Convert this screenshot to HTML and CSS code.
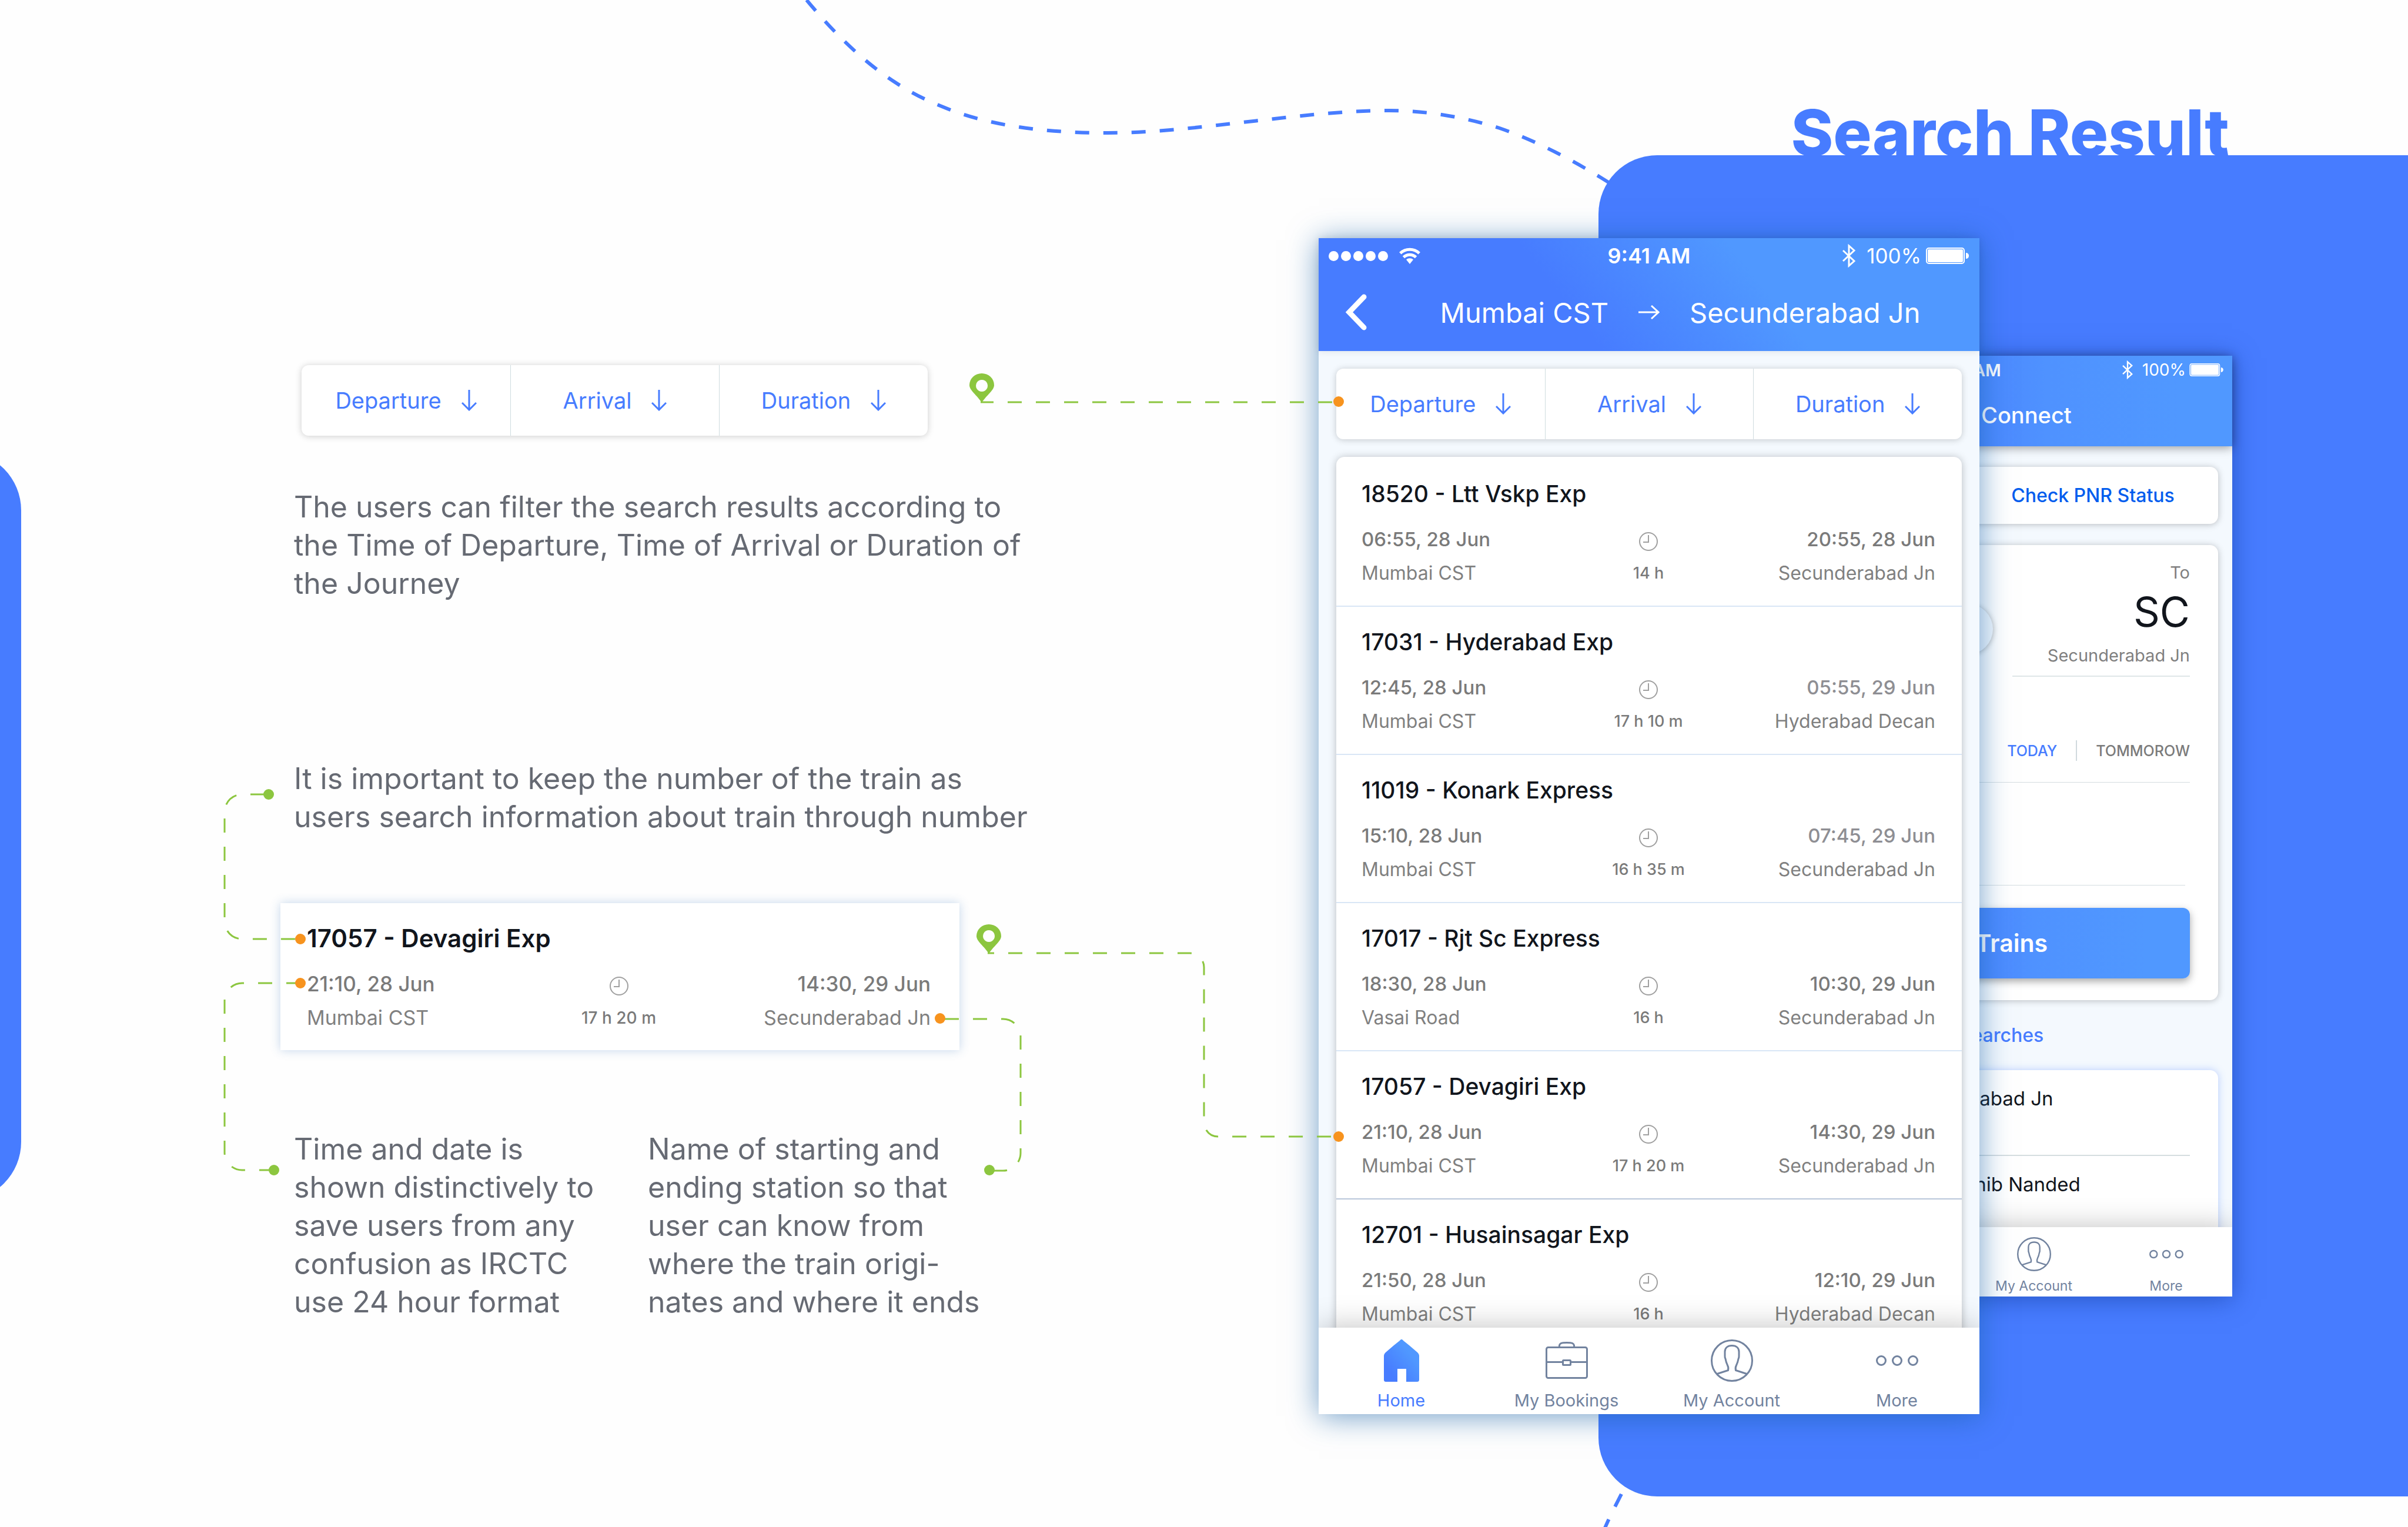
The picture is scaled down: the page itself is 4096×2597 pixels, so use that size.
FILE: index.html
```html
<!DOCTYPE html>
<html lang="en">
<head>
<meta charset="utf-8">
<title>Search Result</title>
<link rel="stylesheet" href="styles.css">
</head>
<body>
<svg class="symbols" aria-hidden="true">
  <defs>
    <linearGradient id="home-fill" x1="0" y1="1" x2="1" y2="0">
      <stop offset="0.2" stop-color="#477cff"/>
      <stop offset="0.7" stop-color="#5098ff"/>
    </linearGradient>
  </defs>
  <symbol id="i-wifi" viewBox="0 0 36 28">
    <path fill="#fff" d="M18 28l-6-7.500a9 9 0 0 1 12 0z"/>
    <path fill="none" stroke="#fff" stroke-width="5" d="M7.500 16.500a15 15 0 0 1 21 0M1.800 9.800a23.500 23.500 0 0 1 32.400 0"/>
  </symbol>
  <symbol id="i-bluetooth" viewBox="0 0 24 40">
    <path fill="none" stroke="#fff" stroke-width="3" d="M2 11l19 18-9 8V3l9 8L2 29"/>
  </symbol>
  <symbol id="i-battery" viewBox="0 0 74 28">
    <rect x="1" y="1" width="64" height="26" rx="4" fill="none" stroke="#fff" stroke-width="2"/>
    <rect x="3" y="3" width="60" height="22" rx="2" fill="#fff"/>
    <path fill="#fff" d="M68 9c3 0 5 2 5 5s-2 5-5 5z"/>
  </symbol>
  <symbol id="i-chevron" viewBox="0 0 38 62">
    <path fill="none" stroke="#fff" stroke-width="9" stroke-linecap="round" stroke-linejoin="miter" d="M32 5L7 31l25 26"/>
  </symbol>
  <symbol id="i-arrow-right" viewBox="0 0 36 24">
    <path fill="none" stroke="currentColor" stroke-width="3" d="M0 12h34M22 1l12 11-12 11"/>
  </symbol>
  <symbol id="i-arrow-down" viewBox="0 0 26 36">
    <path fill="none" stroke="#477cff" stroke-width="3" d="M13 0v34M1 22l12 12 12-12"/>
  </symbol>
  <symbol id="i-clock" viewBox="0 0 32 32">
    <circle cx="16" cy="16" r="15" fill="none" stroke="#a0a0a0" stroke-width="2"/>
    <path fill="none" stroke="#a0a0a0" stroke-width="2" d="M16 5v12H7"/>
  </symbol>
  <symbol id="i-home" viewBox="0 0 72 72">
    <path fill="url(#home-fill)" d="M33 2c2-2.600 4-2.600 6 0l10 8 14 12c2 2 3 4 3 6v40c0 3-1 4-4 4H44V50H29v22H10c-3 0-4-1-4-4V28c0-2 1-4 3-6l14-12z"/>
  </symbol>
  <symbol id="i-bag" viewBox="0 0 72 72">
    <g fill="none" stroke="#72839f" stroke-width="3">
      <rect x="1.500" y="13.500" width="69" height="52" rx="3"/>
      <path d="M23.500 13c-1-7 4-7.500 12.500-7.500s13.500.5 12.500 7.500M1.500 38.500h27M43.500 38.500h27"/>
      <rect x="29.500" y="35.500" width="13" height="8" rx="1"/>
    </g>
  </symbol>
  <symbol id="i-account" viewBox="0 0 72 72">
    <g fill="none" stroke="#72839f" stroke-width="3">
      <circle cx="36" cy="36" r="34.500"/>
      <path d="M11 58.500l18.500-6c.8-3 .3-6-1-8.500-2.500-5-3-8-3.500-11-1.200-2-1.200-3-1-5.500V21c0-6 4-10.500 12-10.500S48 15 48 21v6.500c.2 2.500.2 3.500-1 5.500-.5 3-1 6-3.500 11-1.300 2.500-1.800 5.500-1 8.500l18.500 6"/>
    </g>
  </symbol>
  <symbol id="i-more" viewBox="0 0 72 72">
    <g fill="none" stroke="#72839f" stroke-width="3">
      <circle cx="9" cy="36" r="7.500"/><circle cx="36" cy="36" r="7.500"/><circle cx="63" cy="36" r="7.500"/>
    </g>
  </symbol>
</svg>

<main class="page">
  <div class="prev-panel"></div>

  <svg class="trail" viewBox="0 0 4096 2597" aria-hidden="true">
    <g fill="none" stroke="#477cff" stroke-width="6" stroke-dasharray="24 24">
      <path d="M1372 0C1435 76 1509 145 1602 181C1688 217 1789 226 1884 226C1964 226 2044 216 2123 207C2203 198 2283 188 2362 188C2426 188 2491 199 2551 218C2609 238 2667 268 2723 302L2760 325"/>
      <path d="M2758 2541c-10 20-20 38-29 60"/>
    </g>
  </svg>

  <section class="notes">
    <div class="filter filter-note">
      <button type="button">Departure <svg><use href="#i-arrow-down"/></svg></button>
      <button type="button">Arrival <svg><use href="#i-arrow-down"/></svg></button>
      <button type="button">Duration <svg><use href="#i-arrow-down"/></svg></button>
    </div>
    <p class="note note-filter">The users can filter the search results according to<br>the Time of Departure, Time of Arrival or Duration of<br>the Journey</p>
    <p class="note note-number">It is important to keep the number of the train as<br>users search information about train through number</p>
    <article class="train train-note">
      <h2>17057 - Devagiri Exp</h2>
      <div class="legs">
        <p><time>21:10, 28 Jun</time><span>Mumbai CST</span></p>
        <p class="span"><svg><use href="#i-clock"/></svg><span>17 h 20 m</span></p>
        <p class="arrive"><time>14:30, 29 Jun</time><span>Secunderabad Jn</span></p>
      </div>
    </article>
    <div class="note-pair">
      <p class="note">Time and date is<br>shown distinctively to<br>save users from any<br>confusion as IRCTC<br>use 24 hour format</p>
      <p class="note">Name of starting and<br>ending station so that<br>user can know from<br>where the train origi-<br>nates and where it ends</p>
    </div>
  </section>

  <section class="showcase">
    <h1>Search Result</h1>
    <div class="stage">
      <div class="panel"></div>

      <div class="phone back">
        <header>
          <div class="status">
            <span></span>
            <b>9:41 AM</b>
            <span class="power"><svg class="bt"><use href="#i-bluetooth"/></svg>100%<svg class="battery"><use href="#i-battery"/></svg></span>
          </div>
          <div class="title">IRCTC Rail Connect</div>
        </header>
        <div class="body">
          <div class="modes">
            <button type="button">Find Trains</button>
            <button type="button">Check PNR Status</button>
          </div>
          <form class="search" onsubmit="return false">
            <div class="ends">
              <div class="end"><span>From</span><strong>CSTM</strong><span>Mumbai CST</span></div>
              <span class="swap"></span>
              <div class="end to"><span>To</span><strong>SC</strong><span>Secunderabad Jn</span></div>
            </div>
            <div class="days">
              <button type="button" class="on">TODAY</button>
              <button type="button">TOMMOROW</button>
            </div>
            <div class="class-row"></div>
            <button type="submit" class="go">Search Trains</button>
          </form>
          <h2>Recent Searches</h2>
          <ul class="recent">
            <li><span>Mumbai CST</span><span>-</span><span>Secunderabad Jn</span></li>
            <li><span>Mumbai CST</span><span>-</span><span>Hazur Sahib Nanded</span></li>
          </ul>
        </div>
        <nav class="tabs">
          <a href="#home"><svg><use href="#i-home"/></svg>Home</a>
          <a href="#bookings"><svg><use href="#i-bag"/></svg>My Bookings</a>
          <a href="#account"><svg><use href="#i-account"/></svg>My Account</a>
          <a href="#more"><svg><use href="#i-more"/></svg>More</a>
        </nav>
      </div>

      <div class="phone front">
        <header>
          <div class="status">
            <span class="signal"><i></i><i></i><i></i><i></i><i></i><svg><use href="#i-wifi"/></svg></span>
            <b>9:41 AM</b>
            <span class="power"><svg class="bt"><use href="#i-bluetooth"/></svg>100%<svg class="battery"><use href="#i-battery"/></svg></span>
          </div>
          <div class="route">
            <div class="from"><button type="button" aria-label="Back"><svg><use href="#i-chevron"/></svg></button><span>Mumbai CST</span></div>
            <svg class="to-arrow"><use href="#i-arrow-right"/></svg>
            <span>Secunderabad Jn</span>
          </div>
        </header>
        <div class="body">
          <div class="filter">
            <button type="button">Departure <svg><use href="#i-arrow-down"/></svg></button>
            <button type="button">Arrival <svg><use href="#i-arrow-down"/></svg></button>
            <button type="button">Duration <svg><use href="#i-arrow-down"/></svg></button>
          </div>
          <div class="results">
            <article class="train">
              <h2>18520 - Ltt Vskp Exp</h2>
              <div class="legs">
                <p><time>06:55, 28 Jun</time><span>Mumbai CST</span></p>
                <p class="span"><svg><use href="#i-clock"/></svg><span>14 h</span></p>
                <p class="arrive"><time>20:55, 28 Jun</time><span>Secunderabad Jn</span></p>
              </div>
            </article>
            <article class="train">
              <h2>17031 - Hyderabad Exp</h2>
              <div class="legs">
                <p><time>12:45, 28 Jun</time><span>Mumbai CST</span></p>
                <p class="span"><svg><use href="#i-clock"/></svg><span>17 h 10 m</span></p>
                <p class="arrive"><time class="soft">05:55, 29 Jun</time><span>Hyderabad Decan</span></p>
              </div>
            </article>
            <article class="train">
              <h2>11019 - Konark Express</h2>
              <div class="legs">
                <p><time>15:10, 28 Jun</time><span>Mumbai CST</span></p>
                <p class="span"><svg><use href="#i-clock"/></svg><span>16 h 35 m</span></p>
                <p class="arrive"><time class="soft">07:45, 29 Jun</time><span>Secunderabad Jn</span></p>
              </div>
            </article>
            <article class="train">
              <h2>17017 - Rjt Sc Express</h2>
              <div class="legs">
                <p><time>18:30, 28 Jun</time><span>Vasai Road</span></p>
                <p class="span"><svg><use href="#i-clock"/></svg><span>16 h</span></p>
                <p class="arrive"><time>10:30, 29 Jun</time><span>Secunderabad Jn</span></p>
              </div>
            </article>
            <article class="train strong-rule">
              <h2>17057 - Devagiri Exp</h2>
              <div class="legs">
                <p><time>21:10, 28 Jun</time><span>Mumbai CST</span></p>
                <p class="span"><svg><use href="#i-clock"/></svg><span>17 h 20 m</span></p>
                <p class="arrive"><time>14:30, 29 Jun</time><span>Secunderabad Jn</span></p>
              </div>
            </article>
            <article class="train">
              <h2>12701 - Husainsagar Exp</h2>
              <div class="legs">
                <p><time>21:50, 28 Jun</time><span>Mumbai CST</span></p>
                <p class="span"><svg><use href="#i-clock"/></svg><span>16 h</span></p>
                <p class="arrive"><time>12:10, 29 Jun</time><span>Hyderabad Decan</span></p>
              </div>
            </article>
          </div>
        </div>
        <nav class="tabs">
          <a href="#home" class="on"><svg><use href="#i-home"/></svg>Home</a>
          <a href="#bookings"><svg><use href="#i-bag"/></svg>My Bookings</a>
          <a href="#account"><svg><use href="#i-account"/></svg>My Account</a>
          <a href="#more"><svg><use href="#i-more"/></svg>More</a>
        </nav>
      </div>
    </div>
  </section>

  <svg class="connectors" viewBox="0 0 4096 2597" aria-hidden="true">
    <g fill="none" stroke="#8cc63f" stroke-width="3" stroke-dasharray="24 24">
      <path stroke-dashoffset="2" d="M1668 684H2277"/>
      <path stroke-dashoffset="13" d="M1680 1621H2024a24 24 0 0 1 24 24V1909a24 24 0 0 0 24 24H2277"/>
      <path stroke-dashoffset="41" d="M457 1351H412a30 30 0 0 0-30 30V1567a30 30 0 0 0 30 30H511"/>
      <path d="M511 1672H412a30 30 0 0 0-30 30V1960a30 30 0 0 0 30 30H466"/>
      <path stroke-dashoffset="40" d="M1599 1733H1706a30 30 0 0 1 30 30V1961a30 30 0 0 1-30 30H1682"/>
    </g>
    <g fill="#8cc63f">
      <path fill-rule="evenodd" d="M1670 685C1662 672 1649 664 1649 655A21 20 0 0 1 1691 655C1691 664 1678 672 1670 685ZM1670 646a10 10 0 1 0 .1 0Z"/>
      <path fill-rule="evenodd" d="M1682 1622C1674 1609 1661 1601 1661 1592A21 20 0 0 1 1703 1592C1703 1601 1690 1609 1682 1622ZM1682 1582a10 10 0 1 0 .1 0Z"/>
      <circle cx="457" cy="1351" r="9"/>
      <circle cx="466" cy="1990" r="9"/>
      <circle cx="1683" cy="1990" r="9"/>
    </g>
    <g fill="#f7931e">
      <circle cx="2277" cy="683" r="9"/>
      <circle cx="2277" cy="1933" r="9"/>
      <circle cx="511" cy="1597" r="9"/>
      <circle cx="511" cy="1672" r="9"/>
      <circle cx="1599" cy="1732" r="9"/>
    </g>
  </svg>
</main>
</body>
</html>
```
FILE: styles.css
```css
* { box-sizing: border-box; }

body {
  margin: 0;
  background: #fefefe;
  font-family: Inter, "Liberation Sans", sans-serif;
}

h1, h2, p, ul { margin: 0; padding: 0; }
ul { list-style: none; }
button { border: 0; padding: 0; background: none; font: inherit; color: inherit; }
a { color: inherit; text-decoration: none; }
svg { display: block; flex: none; }
.symbols { position: absolute; width: 0; height: 0; }

/* page */
.page {
  position: relative;
  display: grid;
  grid-template-columns: minmax(0, 2243fr) minmax(0, 1853fr);
  min-height: 100vh;
  overflow: hidden;
}
.trail, .connectors {
  position: absolute;
  top: 0;
  left: 0;
  width: 100%;
  height: auto;
  pointer-events: none;
}
.connectors { z-index: 3; }
.prev-panel {
  position: absolute;
  top: 768px;
  right: 100%;
  width: 400px;
  height: 1274px;
  margin-right: -36px;
  border-radius: 100px;
  background: #477cff;
}

/* notes */
.notes {
  position: relative;
  padding: 621px 0 0 477px;
}
.filter-note { width: 1065px; margin-left: 36px; }
.note {
  margin-left: 23px;
  font-size: 50px;
  line-height: 65px;
  color: #666a73;
  white-space: nowrap;
}
.note-filter { margin-top: 89px; }
.note-number { margin-top: 267px; }
.train-note {
  width: 1155px;
  margin-top: 114px;
  background: #fff;
  box-shadow: 0 0 16px rgba(60, 120, 190, .3);
}
.note-pair {
  display: grid;
  grid-template-columns: 602px auto;
  margin-top: 136px;
}

/* filter bar */
.filter {
  display: grid;
  grid-template-columns: repeat(3, 1fr);
  height: 120px;
  border-radius: 12px;
  background: #fff;
  box-shadow: 0 1px 12px rgba(0, 0, 0, .2);
}
.filter button {
  display: flex;
  align-items: center;
  justify-content: center;
  gap: 34px;
  font-size: 38px;
  color: #477cff;
}
.filter button + button { border-left: 1px solid #cfdcdf; }
.filter svg { width: 26px; height: 36px; }

/* train row */
.train {
  padding: 36px 49px 35px 45px;
}
.train h2 {
  font-size: 39px;
  line-height: 48px;
  font-weight: 500;
  color: #11151c;
}
.legs {
  display: grid;
  grid-template-columns: 1fr auto 1fr;
  margin-top: 33px;
}
.legs p {
  display: flex;
  flex-direction: column;
  gap: 18px;
  font-size: 32px;
  line-height: 40px;
  color: #808080;
}
.legs time { font-size: 33px; font-weight: 500; color: #7a7a7a; }
.legs .soft { color: #8e8e93; }
.legs .arrive { text-align: right; }
.legs .span {
  align-items: center;
  padding-top: 8px;
  font-size: 27px;
  font-weight: 500;
  color: #7a7a7a;
}
.legs svg { width: 32px; height: 32px; }

.train-note h2 { font-size: 42px; font-weight: 600; }
.train-note .legs p { font-size: 34px; }
.train-note .legs time { font-size: 35px; }
.train-note .legs .span { font-size: 28px; }

/* showcase */
.showcase {
  position: relative;
  display: flex;
  flex-direction: column;
  padding-top: 186px;
}
.showcase h1 {
  padding-right: 304px;
  text-align: right;
  font-size: 109px;
  line-height: 78px;
  font-weight: 800;
  color: #477cff;
}
.stage {
  flex: 1;
  display: grid;
  grid-template-columns: minmax(0, 1fr);
}
.stage > * { grid-area: 1 / 1; }
.panel {
  margin: 0 0 52px 476px;
  border-radius: 100px 0 0 100px;
  background: #477cff;
}

/* phones */
.phone {
  display: flex;
  flex-direction: column;
  align-self: start;
  background: #f4f9fe;
}
.front {
  z-index: 2;
  width: 1124px;
  height: 2000px;
  margin-top: 141px;
  box-shadow: 0 4px 48px rgba(20, 95, 165, .6);
}
.back {
  width: 900px;
  height: 1600px;
  margin: 341px 0 0 654px;
  box-shadow: 0 4px 40px rgba(10, 50, 140, .5);
}
.phone header { position: relative; color: #fff; }
.front header {
  background: linear-gradient(52deg, #477cff 38%, #5098ff 66%);
  box-shadow: 0 0 12px rgba(0, 0, 0, .1);
}
.back header {
  background: linear-gradient(90deg, #477cff 35%, #4f92ff 65%, #5098ff 90%);
  box-shadow: 0 2px 16px rgba(0, 0, 0, .4);
}
.body { flex: 1; min-height: 0; overflow: hidden; padding: 30px; }

.status {
  display: grid;
  grid-template-columns: 1fr auto 1fr;
  align-items: center;
  height: 60px;
  padding: 0 17px;
  font-size: 35px;
}
.status b { font-size: 36px; font-weight: 600; }
.signal { display: flex; align-items: center; gap: 4px; }
.signal i { width: 17px; height: 17px; border-radius: 50%; background: #fff; }
.signal svg { width: 36px; height: 28px; margin-left: 15px; }
.power { display: flex; align-items: center; justify-content: flex-end; }
.bt { width: 24px; height: 40px; margin-right: 18px; }
.battery { width: 74px; height: 28px; margin-left: 8px; }

.back .status { height: 48px; padding: 0 14px; font-size: 28px; }
.back .status b { font-size: 29px; }
.back .bt { width: 20px; height: 32px; margin-right: 15px; }
.back .battery { width: 59px; height: 22px; margin-left: 6px; }

.route {
  display: grid;
  grid-template-columns: 1fr 36px 1fr;
  align-items: center;
  gap: 51px;
  height: 132px;
  padding: 0 45px;
  font-size: 47px;
}
.from { display: flex; align-items: center; justify-content: space-between; }
.from svg { width: 38px; height: 62px; }
.to-arrow { width: 36px; height: 24px; }

.title {
  height: 106px;
  line-height: 106px;
  text-align: center;
  font-size: 38px;
  font-weight: 500;
}

.results {
  margin-top: 30px;
  padding-top: 3px;
  border-radius: 14px;
  background: #fff;
  box-shadow: 0 1px 14px rgba(0, 0, 0, .25);
}
.results .train { padding: 36px 45px 35px 43px; border-bottom: 2px solid #d9e6f6; }
.results .strong-rule { border-bottom-color: #b9c6da; }

/* tab bar */
.tabs {
  position: relative;
  display: grid;
  grid-template-columns: repeat(4, 1fr);
  height: 147px;
  padding-top: 20px;
  background: #fff;
  box-shadow: 0 0 48px rgba(0, 0, 0, .25);
  clip-path: inset(-60px 0 0 0);
  font-size: 29px;
  line-height: 36px;
  color: #72839f;
}
.tabs a {
  display: flex;
  flex-direction: column;
  align-items: center;
  gap: 14px;
}
.tabs svg { width: 72px; height: 72px; }
.tabs .on { color: #477cff; }
.back .tabs { height: 118px; padding-top: 17px; font-size: 23px; line-height: 28px; }
.back .tabs a { gap: 11px; }
.back .tabs svg { width: 58px; height: 58px; }

/* back phone */
.back .body { padding: 35px 24px 0; }
.modes {
  display: grid;
  grid-template-columns: 1fr 1fr;
  height: 97px;
  border-radius: 14px;
  background: #fff;
  box-shadow: 0 1px 12px rgba(0, 0, 0, .25);
  font-size: 32px;
  font-weight: 500;
  color: #005cee;
}
.search {
  height: 774px;
  margin-top: 36px;
  padding: 29px 48px 0;
  border-radius: 14px;
  background: #fff;
  box-shadow: 0 1px 12px rgba(0, 0, 0, .25);
}
.ends { display: flex; align-items: center; justify-content: space-between; }
.end {
  display: flex;
  flex-direction: column;
  width: 302px;
  padding-bottom: 16px;
  border-bottom: 2px solid #dfe6e8;
  font-size: 29px;
  line-height: 36px;
  color: #808080;
}
.end strong {
  margin: 7px 0 14px;
  font-size: 70px;
  line-height: 84px;
  font-weight: 400;
  color: #11151c;
}
.to { text-align: right; }
.swap {
  width: 86px;
  height: 86px;
  margin-top: 32px;
  border-radius: 50%;
  background: #f4f9fe;
  box-shadow: 0 1px 10px rgba(0, 0, 0, .3);
}
.days {
  display: flex;
  justify-content: flex-end;
  height: 180px;
  padding: 108px 0 36px;
  border-bottom: 1px solid #d5dde0;
  font-size: 25px;
  line-height: 36px;
  font-weight: 500;
  color: #7b7b7b;
}
.days .on { margin-right: 32px; color: #477cff; }
.days .on + button { padding-left: 32px; border-left: 2px solid #d0dade; }
.class-row { height: 175px; margin-right: 8px; border-bottom: 1px solid #d5dde0; }
.go {
  width: 100%;
  height: 120px;
  margin-top: 38px;
  border-radius: 12px;
  background: linear-gradient(90deg, #477cff 35%, #4f92ff 65%, #5098ff 90%);
  box-shadow: 0 5px 14px rgba(0, 0, 0, .35);
  font-size: 41px;
  font-weight: 600;
  color: #fff;
}
.back h2 {
  margin: 40px 0 39px;
  text-align: center;
  font-size: 32px;
  line-height: 40px;
  font-weight: 500;
  color: #477cff;
}
.recent {
  padding: 0 48px;
  border-radius: 14px;
  background: #fff;
  box-shadow: 0 0 14px rgba(71, 124, 255, .35);
  font-size: 33px;
  line-height: 40px;
  color: #11151c;
  white-space: nowrap;
}
.recent li {
  display: grid;
  grid-template-columns: 204px 20px auto;
  gap: 12px;
  padding: 28px 0 76px;
  border-bottom: 2px solid #d5dde0;
}
```
